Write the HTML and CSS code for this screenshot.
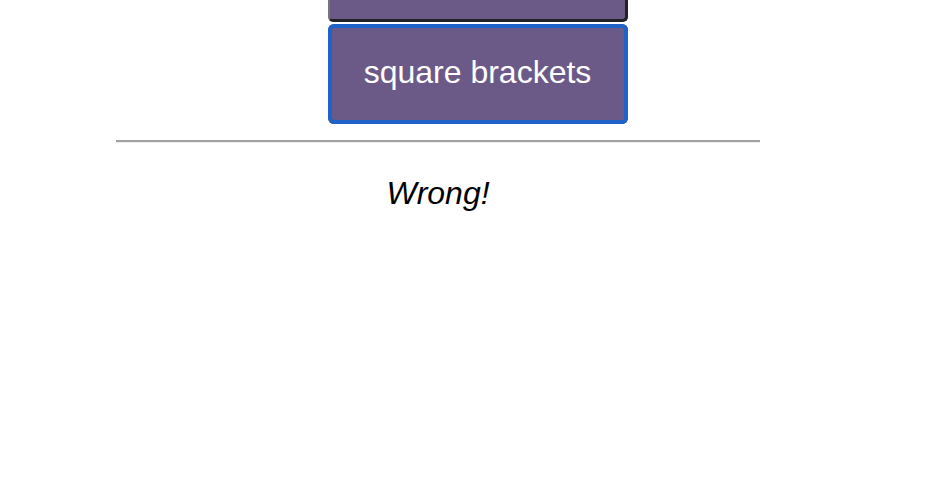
FILE: index.html
```html
<!DOCTYPE html>
<html>
<head>
<meta charset="utf-8">
<link rel="stylesheet" href="styles.css">
</head>
<body>
<div class="quiz">
  <div class="choices">
    <button class="choice choice-prev" aria-label="previous choice"></button>
    <button class="choice choice-focus">square brackets</button>
  </div>
  <hr class="rule">
  <p class="result">Wrong!</p>
</div>
</body>
</html>
```
FILE: styles.css
```css
html, body {
  margin: 0;
  padding: 0;
  background: #ffffff;
  font-family: "Liberation Sans", Arial, sans-serif;
}
.quiz {
  width: 644px;
  margin-left: 116px;
  display: flex;
  flex-direction: column;
}
.choices {
  display: flex;
  flex-direction: column;
  align-items: flex-start;
  padding-left: 212px;
  gap: 2px;
  margin-top: -78px;
}
.choice {
  box-sizing: border-box;
  width: 300px;
  height: 100px;
  background: #6b5a88;
  color: #ffffff;
  font-family: "Liberation Sans", Arial, sans-serif;
  font-size: 32px;
  border-style: solid;
  border-width: 2px 3px 3px 2px;
  border-color: #767676 #222222 #222222 #767676;
  border-radius: 5px;
  padding: 0 0 2px 0;
  margin: 0;
}
.choice-focus {
  outline: 4px solid #1f63c9;
  outline-offset: -4px;
  border-radius: 6px;
}
.rule {
  margin: 16px 0 0 0;
  height: 0;
  border: 0;
  border-top: 2px solid #a0a0a0;
  border-bottom: 1px solid #eeeeee;
}
.result {
  margin: 32px 0 0 0;
  text-align: center;
  font-style: italic;
  font-size: 32px;
  line-height: 37px;
  color: #000000;
}
```
